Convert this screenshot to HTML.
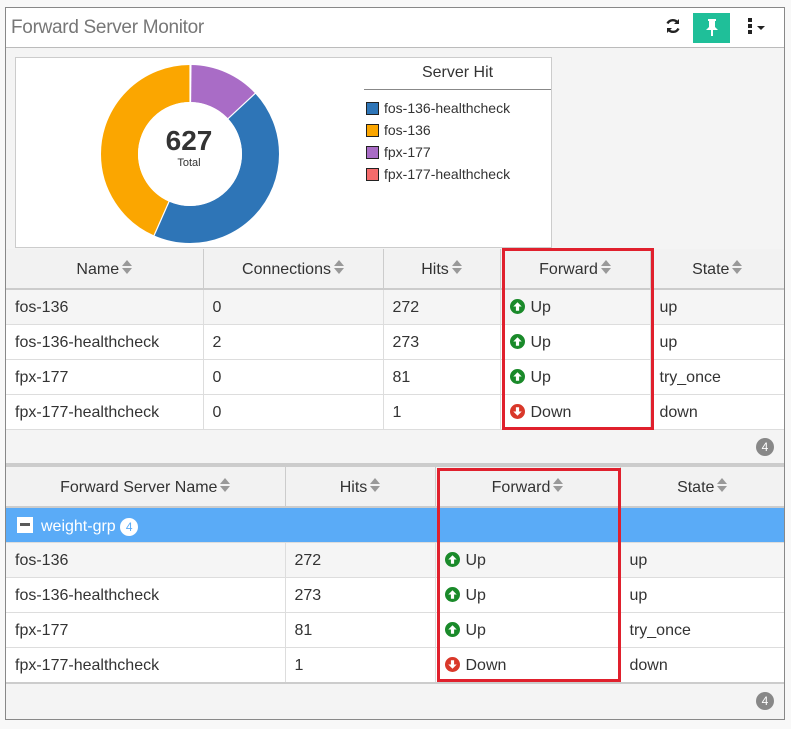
<!DOCTYPE html>
<html><head><meta charset="utf-8"><style>
*{box-sizing:border-box;margin:0;padding:0}
body{width:791px;height:729px;background:#f8f8f8;font-family:"Liberation Sans",sans-serif;color:#333;position:relative;overflow:hidden}
.a{position:absolute}
.panel{left:5px;top:7px;width:780px;height:713px;border:1px solid #888;background:#f4f4f4}
.hdr{left:6px;top:8px;width:778px;height:40px;background:#fff;border-bottom:1px solid #bbb}
.title{left:11px;top:17px;font-size:19px;color:#777;letter-spacing:-0.3px}
table{border-collapse:collapse;position:absolute;left:6px;width:778px;font-size:16px;table-layout:fixed}
th{height:40px;background:#f2f2f2;font-weight:normal;color:#333;border-right:1px solid #ccc;border-bottom:2px solid #ccc;text-align:center;padding-top:2px}
td{height:35px;padding-left:9px;padding-top:3px;border-right:1px solid #ddd;border-bottom:1px solid #ddd;background:#fff}
tr.g td{background:#f5f5f5}
th:last-child,td:last-child{border-right:none}
.s{display:inline-block;width:10px;height:15px;vertical-align:-1px;margin-left:3px;position:relative}
.s:before,.s:after{content:"";position:absolute;left:0;border-left:5px solid transparent;border-right:5px solid transparent}
.s:before{top:0;border-bottom:6px solid #999}
.s:after{top:8px;border-top:6px solid #999}
.ic{display:inline-block;width:15px;height:15px;vertical-align:-2px;margin-right:6px}
.red{border:3px solid #e0202d}
.badge{width:18px;height:18px;border-radius:50%;background:#888;color:#fff;font-size:12px;text-align:center;line-height:18px}
.leg{font-size:14px;left:366px}
.leg div{height:22px;line-height:22px}
.sw{display:inline-block;width:13px;height:13px;border:1px solid #222;vertical-align:-2px;margin-right:5px}
</style></head><body>
<svg width="0" height="0" style="position:absolute"><defs>
<symbol id="u" viewBox="0 0 16 16"><circle cx="8" cy="8" r="8" fill="#1a8a2a"/><path d="M8 3.5L12.5 8H9.7v4.5H6.3V8H3.5z" fill="#fff"/></symbol>
<symbol id="d" viewBox="0 0 16 16"><circle cx="8" cy="8" r="8" fill="#d9382a"/><path d="M8 12.5L12.5 8H9.7V3.5H6.3V8H3.5z" fill="#fff"/></symbol>
</defs></svg>
<div class="a panel"></div>
<div class="a hdr"></div>
<div class="a title">Forward Server Monitor</div>
<svg class="a" style="left:664px;top:17px" width="18" height="18" viewBox="0 0 18 18"><path d="M14 6A6 6 0 0 0 3.5 6.5M4 12A6 6 0 0 0 14.5 11.5" stroke="#222" stroke-width="2.4" fill="none"/><path d="M15 2v5h-5z M3 16v-5h5z" fill="#222"/></svg>
<div class="a" style="left:693px;top:13px;width:37px;height:30px;background:#1fbf99"></div>
<svg class="a" style="left:705px;top:18px" width="14" height="20" viewBox="0 0 14 20"><path d="M3 1h8v2h-1v6l3 3H1l3-3V3H3z" fill="#fff"/><rect x="6" y="12" width="2" height="6" fill="#fff"/></svg>
<div class="a" style="left:748px;top:18px;width:4px;height:4px;background:#222;box-shadow:0 6px #222,0 12px #222"></div>
<div class="a" style="left:757px;top:26px;border-left:4px solid transparent;border-right:4px solid transparent;border-top:4px solid #222"></div>

<div class="a" style="left:15px;top:57px;width:537px;height:191px;background:#fff;border:1px solid #ccc"></div>
<svg class="a" style="left:100px;top:64px" width="180" height="180" viewBox="0 0 180 180">
<g transform="rotate(-90 90 90)" fill="none" stroke-width="37">
<circle cx="90" cy="90" r="70.5" stroke="#f56b6b" stroke-dasharray="0.71 443"/>
<circle cx="90" cy="90" r="70.5" stroke="#a96cc6" stroke-dasharray="0 0.71 57.27 443"/>
<circle cx="90" cy="90" r="70.5" stroke="#2e75b7" stroke-dasharray="0 57.98 192.87 443"/>
<circle cx="90" cy="90" r="70.5" stroke="#fba600" stroke-dasharray="0 250.85 192.16 443"/>
</g>
<g stroke="#fff" stroke-width="1.2">
<line x1="90" y1="90" x2="90" y2="0" transform="rotate(0 90 90)"/>
<line x1="90" y1="90" x2="90" y2="0" transform="rotate(0.6 90 90)"/>
<line x1="90" y1="90" x2="90" y2="0" transform="rotate(47.1 90 90)"/>
<line x1="90" y1="90" x2="90" y2="0" transform="rotate(203.8 90 90)"/>
</g>
<circle cx="90" cy="90" r="52" fill="#fff"/>
</svg>
<div class="a" style="left:150px;top:125px;width:78px;text-align:center;font-size:28px;font-weight:bold;color:#333">627</div>
<div class="a" style="left:150px;top:157px;width:78px;text-align:center;font-size:11px">Total</div>
<div class="a" style="left:364px;top:64px;width:187px;text-align:center;font-size:16px;height:26px;border-bottom:1px solid #888">Server Hit</div>
<div class="a leg" style="top:97px">
<div><span class="sw" style="background:#2e75b7"></span>fos-136-healthcheck</div>
<div><span class="sw" style="background:#fba600"></span>fos-136</div>
<div><span class="sw" style="background:#a96cc6"></span>fpx-177</div>
<div><span class="sw" style="background:#f56b6b"></span>fpx-177-healthcheck</div>
</div>

<table style="top:249px">
<colgroup><col style="width:197px"><col style="width:180px"><col style="width:117px"><col style="width:150px"><col></colgroup>
<tr><th>Name<span class="s"></span></th><th>Connections<span class="s"></span></th><th>Hits<span class="s"></span></th><th>Forward<span class="s"></span></th><th>State<span class="s"></span></th></tr>
<tr class="g"><td>fos-136</td><td>0</td><td>272</td><td><svg class="ic"><use href="#u"/></svg>Up</td><td>up</td></tr>
<tr><td>fos-136-healthcheck</td><td>2</td><td>273</td><td><svg class="ic"><use href="#u"/></svg>Up</td><td>up</td></tr>
<tr><td>fpx-177</td><td>0</td><td>81</td><td><svg class="ic"><use href="#u"/></svg>Up</td><td>try_once</td></tr>
<tr><td>fpx-177-healthcheck</td><td>0</td><td>1</td><td><svg class="ic"><use href="#d"/></svg>Down</td><td>down</td></tr>
</table>
<div class="a red" style="left:502px;top:248px;width:152px;height:182px"></div>
<div class="a badge" style="left:756px;top:438px">4</div>
<div class="a" style="left:6px;top:463px;width:778px;height:4px;background:#ccc"></div>

<table style="top:467px">
<colgroup><col style="width:279px"><col style="width:150px"><col style="width:185px"><col></colgroup>
<tr><th>Forward Server Name<span class="s"></span></th><th>Hits<span class="s"></span></th><th>Forward<span class="s"></span></th><th>State<span class="s"></span></th></tr>
<tr><td colspan="4" style="background:#5aabf7;color:#fff;padding-left:11px"><span style="display:inline-block;width:16px;height:16px;background:#fff;vertical-align:-2px;margin-right:8px;position:relative"><span style="position:absolute;left:3px;top:6px;width:10px;height:3px;background:#5a5a5a"></span></span>weight-grp <span style="display:inline-block;width:18px;height:18px;border-radius:50%;background:#fff;color:#5aabf7;font-size:12px;text-align:center;line-height:18px">4</span></td></tr>
<tr class="g"><td>fos-136</td><td>272</td><td><svg class="ic"><use href="#u"/></svg>Up</td><td>up</td></tr>
<tr><td>fos-136-healthcheck</td><td>273</td><td><svg class="ic"><use href="#u"/></svg>Up</td><td>up</td></tr>
<tr><td>fpx-177</td><td>81</td><td><svg class="ic"><use href="#u"/></svg>Up</td><td>try_once</td></tr>
<tr><td>fpx-177-healthcheck</td><td>1</td><td><svg class="ic"><use href="#d"/></svg>Down</td><td>down</td></tr>
</table>
<div class="a red" style="left:437px;top:468px;width:184px;height:214px"></div>
<div class="a" style="left:6px;top:682px;width:778px;height:2px;background:#ccc"></div>
<div class="a badge" style="left:756px;top:692px">4</div>
</body></html>
